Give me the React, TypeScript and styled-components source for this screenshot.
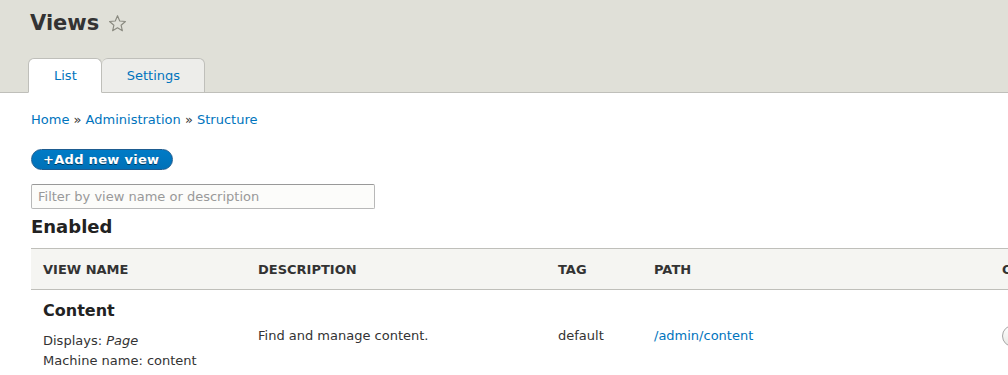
import React from "react";
import styled, { createGlobalStyle } from "styled-components";

const Global = createGlobalStyle`
  html, body { margin: 0; padding: 0; background: #fff; overflow: hidden; }
  body { font-family: "DejaVu Sans", Verdana, sans-serif; font-size: 13px; color: #333; }
  * { box-sizing: border-box; }
`;

const Page = styled.div`
  width: 1300px;
`;

const Header = styled.header`
  background: #e0e0d8;
  border-bottom: 1px solid #bfbfba;
  padding: 0 0 0 28px;
  height: 93px;
  display: flex;
  flex-direction: column;
  justify-content: space-between;
`;

const TitleRow = styled.div`
  display: flex;
  align-items: center;
  gap: 9px;
  padding: 10px 0 0 2px;
`;

const Title = styled.h1`
  margin: 0;
  font-size: 21px;
  line-height: 26px;
  font-weight: bold;
  color: #333;
`;

const Tabs = styled.ul`
  list-style: none;
  margin: 0 0 -1px;
  padding: 0;
  display: flex;
`;

const Tab = styled.li<{ $active?: boolean }>`
  height: 35px;
  padding: 0 24px 0 25px;
  display: flex;
  align-items: center;
  border: 1px solid #bfbfba;
  border-bottom: ${(p) => (p.$active ? "1px solid #fff" : "1px solid #bfbfba")};
  border-left: ${(p) => (p.$active ? "1px solid #bfbfba" : "none")};
  border-radius: 6px 6px 0 0;
  background: ${(p) => (p.$active ? "#fff" : "#ededea")};
  color: #0074bd;
  font-size: 13px;
`;

const Main = styled.main`
  padding: 0 31px;
`;

const Breadcrumb = styled.nav`
  margin-top: 18px;
  line-height: 18px;
  color: #333;
  a { color: #0074bd; text-decoration: none; }
`;

const AddButton = styled.a`
  margin-top: 20px;
  display: inline-flex;
  align-items: center;
  height: 21px;
  padding: 0 13px 0 11px;
  border-radius: 20px;
  background: linear-gradient(#007bc6, #0071b8);
  border: 1px solid #1e5c90;
  color: #fff;
  font-weight: bold;
  font-size: 13px;
  text-shadow: 0 1px rgba(0, 0, 0, 0.5);
  letter-spacing: 0.3px;
`;

const Filter = styled.input`
  display: block;
  margin-top: 14px;
  width: 344px;
  height: 25px;
  border: 1px solid #b8b8b8;
  border-top-color: #999;
  border-radius: 2px;
  background: #fcfcfa;
  padding: 0 6px;
  font-family: "DejaVu Sans", Verdana, sans-serif;
  font-size: 13px;
  color: #333;
  &::placeholder { color: #999; }
`;

const SectionTitle = styled.h2`
  margin: 7px 0 0;
  font-size: 18px;
  line-height: 22px;
  font-weight: bold;
  color: #222;
`;

const Table = styled.table`
  margin-top: 10px;
  border-collapse: collapse;
  width: 1250px;
`;

const Th = styled.th<{ $w?: number }>`
  width: ${(p) => (p.$w ? `${p.$w}px` : "auto")};
  background: #f5f5f2;
  border-top: 1px solid #bfbfba;
  border-bottom: 1px solid #bfbfba;
  text-align: left;
  text-transform: uppercase;
  font-size: 13px;
  font-weight: bold;
  color: #333;
  padding: 0 12px;
  height: 41px;
`;

const Td = styled.td`
  padding: 10px 12px;
  vertical-align: middle;
  color: #333;
  line-height: 20px;
  a { color: #0074bd; text-decoration: none; }
`;

const ViewName = styled.h3`
  margin: 1px 0 10px;
  font-size: 16px;
  line-height: 20px;
  font-weight: bold;
  color: #222;
`;

const Meta = styled.div`
  font-size: 13px;
  line-height: 20px;
`;

const DropButton = styled.span`
  display: inline-flex;
  align-items: center;
  height: 22px;
  padding: 0 14px;
  border: 1px solid #a6a6a6;
  border-radius: 11px;
  background: linear-gradient(#fefefe, #e8e8e4);
  font-size: 13px;
  color: #333;
`;

const Star = () => (
  <svg width="19" height="19" viewBox="0 0 20 20">
    <path
      d="M10 1.8l2.35 5.55 6 .5-4.57 3.95 1.38 5.86L10 14.55l-5.16 3.1 1.38-5.86L1.65 7.85l6-.5z"
      fill="none"
      stroke="#8a8a80"
      strokeWidth="1.2"
      strokeLinejoin="round"
    />
  </svg>
);

export default function App() {
  return (
    <Page>
      <Global />
      <Header>
        <TitleRow>
          <Title>Views</Title>
          <Star />
        </TitleRow>
        <Tabs>
          <Tab $active>List</Tab>
          <Tab>Settings</Tab>
        </Tabs>
      </Header>
      <Main>
        <Breadcrumb>
          <a href="#">Home</a> » <a href="#">Administration</a> » <a href="#">Structure</a>
        </Breadcrumb>
        <AddButton>+Add new view</AddButton>
        <Filter placeholder="Filter by view name or description" />
        <SectionTitle>Enabled</SectionTitle>
        <Table>
          <thead>
            <tr>
              <Th $w={215}>View name</Th>
              <Th $w={300}>Description</Th>
              <Th $w={96}>Tag</Th>
              <Th $w={348}>Path</Th>
              <Th>Operations</Th>
            </tr>
          </thead>
          <tbody>
            <tr>
              <Td>
                <ViewName>Content</ViewName>
                <Meta>
                  Displays: <em>Page</em>
                </Meta>
                <Meta>Machine name: content</Meta>
              </Td>
              <Td>Find and manage content.</Td>
              <Td>default</Td>
              <Td>
                <a href="#">/admin/content</a>
              </Td>
              <Td>
                <DropButton>Edit</DropButton>
              </Td>
            </tr>
          </tbody>
        </Table>
      </Main>
    </Page>
  );
}
